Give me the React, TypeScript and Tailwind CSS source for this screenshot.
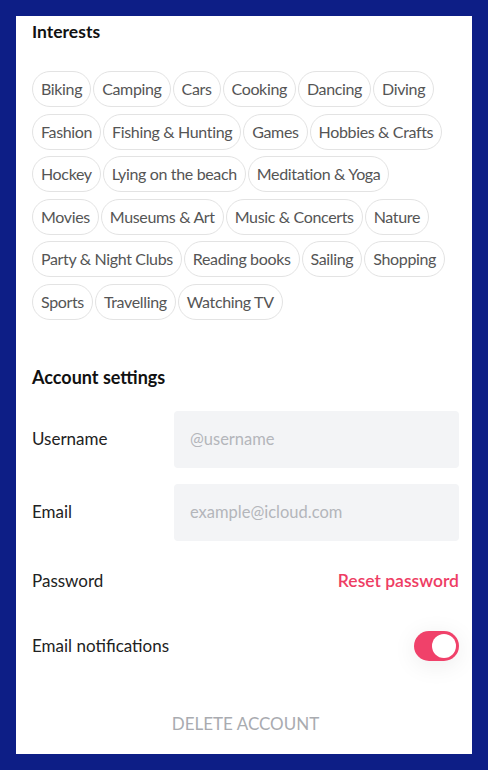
import React, { useState } from "react";

const interests = [
  "Biking", "Camping", "Cars", "Cooking", "Dancing", "Diving",
  "Fashion", "Fishing & Hunting", "Games", "Hobbies & Crafts",
  "Hockey", "Lying on the beach", "Meditation & Yoga",
  "Movies", "Museums & Art", "Music & Concerts", "Nature",
  "Party & Night Clubs", "Reading books", "Sailing", "Shopping",
  "Sports", "Travelling", "Watching TV",
];

export default function App() {
  const [notify, setNotify] = useState(true);

  return (
    <div className="min-h-screen bg-[#0d1e86] p-4 font-['Lato',sans-serif]">
      <div className="bg-white pl-4 pr-[13px] pt-[5px] pb-[18px]">
        {/* Interests */}
        <h2 className="text-[17.5px] font-bold text-[#111] leading-[22px]">Interests</h2>
        <div className="mt-[28px] mr-[7px] flex flex-wrap gap-x-[2px] gap-y-[6.5px]">
          {interests.map(item => (
            <span
              key={item}
              className="h-9 px-2 flex items-center rounded-full border border-[#e3e3e3] text-[16px] text-[#555] tracking-[-0.35px]"
            >
              {item}
            </span>
          ))}
        </div>

        {/* Account settings */}
        <h2 className="mt-[46px] text-[18px] font-bold text-[#111] leading-[22px]">Account settings</h2>

        <div className="mt-[23px] flex items-center">
          <span className="w-[142px] text-[17px] text-[#222]">Username</span>
          <input
            placeholder="@username"
            className="flex-1 h-[57px] rounded-[4px] bg-[#f3f4f6] px-4 text-[16.5px] text-[#333] placeholder:text-[#b4b6bb] outline-none"
          />
        </div>

        <div className="mt-4 flex items-center">
          <span className="w-[142px] text-[17px] text-[#222]">Email</span>
          <input
            placeholder="example@icloud.com"
            className="flex-1 h-[57px] rounded-[4px] bg-[#f3f4f6] px-4 text-[16.5px] text-[#333] placeholder:text-[#b4b6bb] outline-none"
          />
        </div>

        <div className="mt-[27px] flex items-center justify-between">
          <span className="text-[17px] text-[#222]">Password</span>
          <button className="text-[17.5px] font-semibold text-[#ee3d64]">Reset password</button>
        </div>

        <div className="mt-[37px] flex items-center justify-between">
          <span className="text-[17px] text-[#222]">Email notifications</span>
          <button
            onClick={() => setNotify(!notify)}
            className={`w-[45px] h-[30px] rounded-full p-[3px] flex items-center shadow-[0_4px_24px_rgba(0,0,0,0.08)] ${notify ? "bg-[#f0416a] justify-end" : "bg-gray-300 justify-start"}`}
            aria-label="Email notifications"
          >
            <span className="w-6 h-6 rounded-full bg-white" />
          </button>
        </div>

        <div className="mt-[50px] text-center">
          <button className="text-[17px] text-[#a9abb0] uppercase">Delete account</button>
        </div>
      </div>
    </div>
  );
}
